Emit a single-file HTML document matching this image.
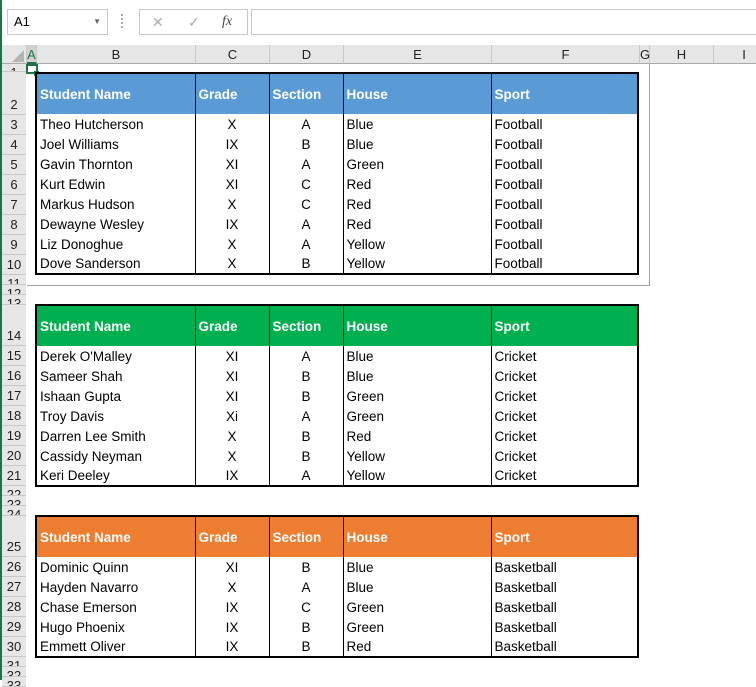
<!DOCTYPE html><html><head><style>
body{margin:0;width:756px;height:680px;overflow:hidden;background:#fff;font-family:"Liberation Sans",sans-serif;position:relative}
.a{position:absolute;box-sizing:border-box}
.rh{position:absolute;left:2px;width:24px;background:#e6e6e6;border-bottom:1px solid #c8c8c8;font-size:13px;color:#222;text-align:center;box-sizing:border-box;overflow:hidden;line-height:18px}
.ch{position:absolute;top:45px;height:19px;background:#e6e6e6;border-right:1px solid #c8c8c8;border-bottom:1px solid #aaa;font-size:13px;text-align:center;line-height:19px;box-sizing:border-box;color:#222}
table{position:absolute;left:35px;border-collapse:collapse;font-size:13.5px;border:2px solid #000}
td{border-left:1px solid #000;padding:0 3px;height:20px;box-sizing:border-box;white-space:nowrap;color:#000}
tr.h td{height:41px;color:#fff;font-weight:bold}
td.c{text-align:center}
</style></head><body>
<div class="a" style="left:0;top:0;width:2px;height:680px;background:#217346"></div>
<div class="a" style="left:2px;top:0;width:754px;height:45px;background:#fff"></div>
<div class="a" style="left:7px;top:9px;width:101px;height:26px;border:1px solid #c6c6c6;font-size:13px;line-height:24px;padding-left:6px">A1<span style="position:absolute;right:6px;top:0;font-size:8px;color:#666">▼</span></div>
<div class="a" style="left:121px;top:14px;width:3px;height:14px;border-left:2px dotted #aaa"></div>
<div class="a" style="left:139px;top:9px;width:109px;height:26px;border:1px solid #c6c6c6;color:#aaa;font-size:14px;line-height:24px"><span style="position:absolute;left:12px">✕</span><span style="position:absolute;left:48px">✓</span><span style="position:absolute;left:82px;color:#444;font-family:'Liberation Serif',serif;font-style:italic">fx</span></div>
<div class="a" style="left:251px;top:9px;width:510px;height:26px;border:1px solid #c6c6c6"></div>
<div class="a" style="left:2px;top:45px;width:25px;height:19px;background:#e6e6e6;border-right:1px solid #c8c8c8;border-bottom:1px solid #aaa"></div>
<div class="a" style="left:12px;top:50px;width:0;height:0;border-left:12px solid transparent;border-bottom:12px solid #b4b4b4"></div>
<div id="cols"></div><div id="rows"></div>
<div class="a" style="left:27px;top:64px;width:623px;height:222px;border-right:1px solid #a0a0a0;border-bottom:1px solid #a0a0a0"></div>
<div class="a" style="left:26px;top:64px;width:12px;height:10px;border:2px solid #217346"></div>
<div class="a" style="left:34px;top:71px;width:5px;height:5px;background:#217346"></div>

<table style="top:72px"><colgroup><col style="width:159px"><col style="width:74px"><col style="width:74px"><col style="width:148px"><col style="width:147px"></colgroup>
<tr class="h" style="background:#5b9bd5"><td>Student Name</td><td>Grade</td><td>Section</td><td>House</td><td>Sport</td></tr>
<tr><td>Theo Hutcherson</td><td class="c">X</td><td class="c">A</td><td>Blue</td><td>Football</td></tr>
<tr><td>Joel Williams</td><td class="c">IX</td><td class="c">B</td><td>Blue</td><td>Football</td></tr>
<tr><td>Gavin Thornton</td><td class="c">XI</td><td class="c">A</td><td>Green</td><td>Football</td></tr>
<tr><td>Kurt Edwin</td><td class="c">XI</td><td class="c">C</td><td>Red</td><td>Football</td></tr>
<tr><td>Markus Hudson</td><td class="c">X</td><td class="c">C</td><td>Red</td><td>Football</td></tr>
<tr><td>Dewayne Wesley</td><td class="c">IX</td><td class="c">A</td><td>Red</td><td>Football</td></tr>
<tr><td>Liz Donoghue</td><td class="c">X</td><td class="c">A</td><td>Yellow</td><td>Football</td></tr>
<tr><td>Dove Sanderson</td><td class="c">X</td><td class="c">B</td><td>Yellow</td><td>Football</td></tr>
</table>
<table style="top:304px"><colgroup><col style="width:159px"><col style="width:74px"><col style="width:74px"><col style="width:148px"><col style="width:147px"></colgroup>
<tr class="h" style="background:#00b050"><td>Student Name</td><td>Grade</td><td>Section</td><td>House</td><td>Sport</td></tr>
<tr><td>Derek O'Malley</td><td class="c">XI</td><td class="c">A</td><td>Blue</td><td>Cricket</td></tr>
<tr><td>Sameer Shah</td><td class="c">XI</td><td class="c">B</td><td>Blue</td><td>Cricket</td></tr>
<tr><td>Ishaan Gupta</td><td class="c">XI</td><td class="c">B</td><td>Green</td><td>Cricket</td></tr>
<tr><td>Troy Davis</td><td class="c">Xi</td><td class="c">A</td><td>Green</td><td>Cricket</td></tr>
<tr><td>Darren Lee Smith</td><td class="c">X</td><td class="c">B</td><td>Red</td><td>Cricket</td></tr>
<tr><td>Cassidy Neyman</td><td class="c">X</td><td class="c">B</td><td>Yellow</td><td>Cricket</td></tr>
<tr><td>Keri Deeley</td><td class="c">IX</td><td class="c">A</td><td>Yellow</td><td>Cricket</td></tr>
</table>
<table style="top:515px"><colgroup><col style="width:159px"><col style="width:74px"><col style="width:74px"><col style="width:148px"><col style="width:147px"></colgroup>
<tr class="h" style="background:#ed7d31"><td>Student Name</td><td>Grade</td><td>Section</td><td>House</td><td>Sport</td></tr>
<tr><td>Dominic Quinn</td><td class="c">XI</td><td class="c">B</td><td>Blue</td><td>Basketball</td></tr>
<tr><td>Hayden Navarro</td><td class="c">X</td><td class="c">A</td><td>Blue</td><td>Basketball</td></tr>
<tr><td>Chase Emerson</td><td class="c">IX</td><td class="c">C</td><td>Green</td><td>Basketball</td></tr>
<tr><td>Hugo Phoenix</td><td class="c">IX</td><td class="c">B</td><td>Green</td><td>Basketball</td></tr>
<tr><td>Emmett Oliver</td><td class="c">IX</td><td class="c">B</td><td>Red</td><td>Basketball</td></tr>
</table>
<script>
var cols=[["A",27,37],["B",37,196],["C",196,270],["D",270,344],["E",344,492],["F",492,640],["G",640,650],["H",650,714],["I",714,775]];
var h="";cols.forEach(function(c){h+='<div class="ch" style="left:'+c[1]+'px;width:'+(c[2]-c[1])+'px'+(c[0]=="A"?';color:#217346;background:#d2d2d2;border-bottom:2px solid #217346':'')+'">'+c[0]+'</div>'});
document.getElementById("cols").innerHTML=h;
var hs={1:8,2:43,11:10,12:10,13:10,14:41,22:10,23:10,24:10,25:41,31:10,32:10,33:10};
var y=64,r="";for(var i=1;i<=33;i++){var ht=hs[i]||20;r+='<div class="rh" style="top:'+y+'px;height:'+ht+'px;padding-top:'+Math.max(ht-19,ht<19?-6:0)+'px">'+i+'</div>';y+=ht;}
document.getElementById("rows").innerHTML=r;
</script>
</body></html>
